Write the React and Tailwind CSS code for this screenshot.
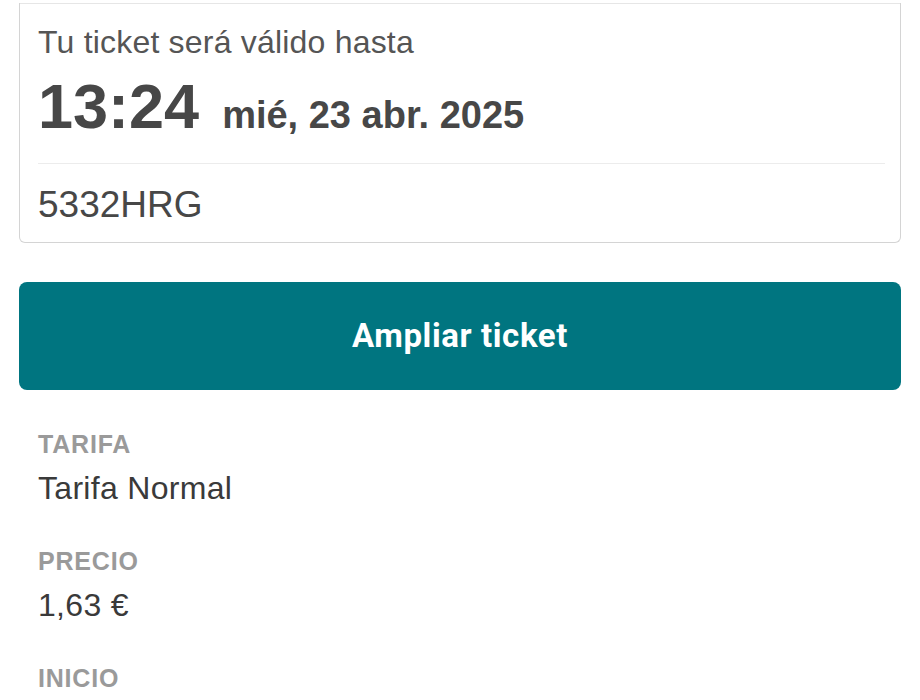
import React from "react";

const details = [
  { label: "TARIFA", value: "Tarifa Normal" },
  { label: "PRECIO", value: "1,63 €" },
  { label: "INICIO", value: "" },
];

function TicketCard() {
  return (
    <div className="mx-[19px] rounded-b-[6px] border-x border-b border-[#d4d4d4] bg-white">
      <div className="mt-[3px] border-t border-[#e6e6e6] px-[18px] pt-[19px] pb-[16px]">
        <p className="text-[32px] leading-[38px] tracking-[0.2px] text-[#555555]">
          Tu ticket será válido hasta
        </p>
        <div className="mt-[13px] flex items-baseline gap-[23px] text-[#474747]">
          <span className="text-[63px] leading-[64px] font-bold">13:24</span>
          <span className="text-[38px] leading-[40px] font-bold">
            mié, 23 abr. 2025
          </span>
        </div>
        <div className="mt-[25px] mr-[-3px] border-t border-[#ececec]" />
        <p className="mt-[19px] text-[37px] leading-[43px] text-[#474747]">
          5332HRG
        </p>
      </div>
    </div>
  );
}

export default function App() {
  return (
    <div
      className="h-[700px] w-[920px] overflow-hidden bg-white"
      style={{ fontFamily: '"Liberation Sans", Arial, sans-serif' }}
    >
      <TicketCard />
      <button className="mx-[19px] mt-[39px] flex h-[108px] w-[882px] items-center justify-center rounded-[8px] bg-[#007580] font-['Roboto',sans-serif] text-[33px] tracking-[0.6px] font-bold text-white">
        Ampliar ticket
      </button>
      <div className="mt-[39px] flex flex-col gap-[39px] px-[38px]">
        {details.map((d) => (
          <div key={d.label}>
            <p className="text-[25px] leading-[30px] tracking-[0.8px] font-bold text-[#9a9a9a]">
              {d.label}
            </p>
            {d.value && (
              <p className="mt-[10px] text-[32px] leading-[38px] tracking-[0.3px] text-[#3a3a3a]">
                {d.value}
              </p>
            )}
          </div>
        ))}
      </div>
    </div>
  );
}
